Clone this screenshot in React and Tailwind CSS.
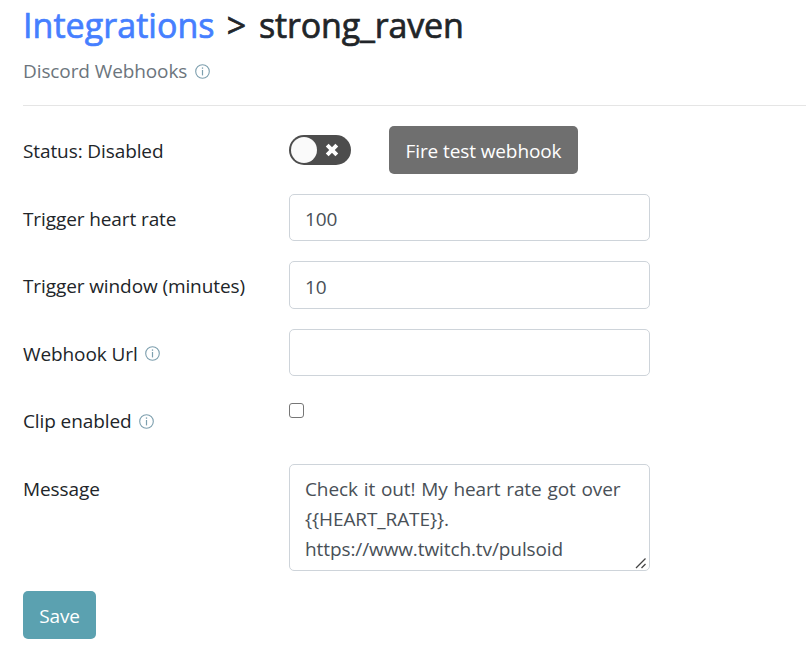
import React, { useState } from 'react'

function InfoIcon({ className = '' }) {
  return (
    <svg
      viewBox="0 0 15 15"
      className={`inline-block h-[15px] w-[15px] shrink-0 text-[#7d9fae] ${className}`}
      fill="none"
      stroke="currentColor"
    >
      <circle cx="7.5" cy="7.5" r="6.8" strokeWidth="1.1" />
      <path d="M7.5 6v5.4" strokeWidth="1.2" />
      <path d="M7.5 3.4v1.4" strokeWidth="1.3" />
    </svg>
  )
}

function Row({ label, info, children }) {
  return (
    <div className="mb-5 flex">
      <div className="flex h-[47.5px] w-[266px] shrink-0 items-center pt-[3px]">
        <span className="whitespace-nowrap">{label}</span>
        {info && <InfoIcon className="ml-[7px]" />}
      </div>
      {children}
    </div>
  )
}

const field =
  'block w-[361px] rounded-[5px] border border-[#ced4da] bg-white px-[15px] text-[#495057] outline-none'

export default function App() {
  const [enabled, setEnabled] = useState(false)
  const [heartRate, setHeartRate] = useState('100')
  const [minutes, setMinutes] = useState('10')
  const [url, setUrl] = useState('')
  const [message, setMessage] = useState(
    'Check it out! My heart rate got over {{HEART_RATE}}. https://www.twitch.tv/pulsoid'
  )

  return (
    <div className="h-[651px] overflow-hidden bg-white pl-[23px] font-['Open_Sans',sans-serif] text-[19px] leading-[30px] tracking-[-0.1px] text-[#212529]">
      {/* Title */}
      <h1 className="flex h-[52px] items-center pb-[2px] text-[34px] leading-[42px] whitespace-nowrap [-webkit-text-stroke:0.7px_currentColor]">
        <a href="#" className="tracking-[0.05px] text-[#467fff]">
          Integrations
        </a>
        <span className="mr-[13px] ml-3">&gt;</span>
        <span className="tracking-[-0.15px]">strong_raven</span>
      </h1>
      <div className="flex h-[38px] items-center text-[#6c757d]">
        <span>Discord Webhooks</span>
        <InfoIcon className="ml-2" />
      </div>
      <hr className="mt-[15px] mb-5 border-t border-[#e5e5e5]" />

      {/* Settings */}
      <Row label={enabled ? 'Status: Enabled' : 'Status: Disabled'}>
        <button
          onClick={() => setEnabled(!enabled)}
          className="mt-[9px] flex h-[30px] w-[62px] items-center rounded-full bg-[#4d4d4d] pl-[1.5px]"
        >
          <span className="h-[26px] w-[26px] rounded-full bg-[#fafafa]" />
          <svg viewBox="0 0 14 14" className="ml-[8.5px] h-[14px] w-[14px]" stroke="#fff" strokeWidth="4">
            <path d="M2.2 2.2l9.6 9.6M11.8 2.2l-9.6 9.6" />
          </svg>
        </button>
        <button className="ml-[38px] h-[47.5px] w-[189px] rounded-[5px] bg-[#6f6f6f] pt-[2px] whitespace-nowrap text-white">
          Fire test webhook
        </button>
      </Row>
      <Row label="Trigger heart rate">
        <input className={`${field} h-[47.5px] pt-[3px]`} value={heartRate} onChange={(e) => setHeartRate(e.target.value)} />
      </Row>
      <Row label="Trigger window (minutes)">
        <input className={`${field} h-[47.5px] pt-1`} value={minutes} onChange={(e) => setMinutes(e.target.value)} />
      </Row>
      <Row label="Webhook Url" info>
        <input className={`${field} h-[47.5px] pt-[3px]`} value={url} onChange={(e) => setUrl(e.target.value)} />
      </Row>
      <Row label="Clip enabled" info>
        <input
          type="checkbox"
          className="mt-[7px] h-[15px] w-[15px] appearance-none rounded-[3px] border border-[#767676] bg-white checked:bg-[#467fff]"
        />
      </Row>
      <Row label="Message">
        <div className="relative">
          <textarea
            className={`${field} h-[107.5px] resize-none overflow-hidden pt-[9px] [word-spacing:1px]`}
            value={message}
            onChange={(e) => setMessage(e.target.value)}
          />
          <svg
            viewBox="0 0 12 12"
            className="pointer-events-none absolute right-[3px] bottom-[2px] h-3 w-3"
            stroke="#444"
            strokeWidth="1.3"
          >
            <path d="M1 11L10.500 1.500M6.500 11L10.500 7" />
          </svg>
        </div>
      </Row>
      <button className="h-[48px] w-[73px] rounded-[5px] bg-[#5ba1b0] pt-px text-white">Save</button>
    </div>
  )
}
